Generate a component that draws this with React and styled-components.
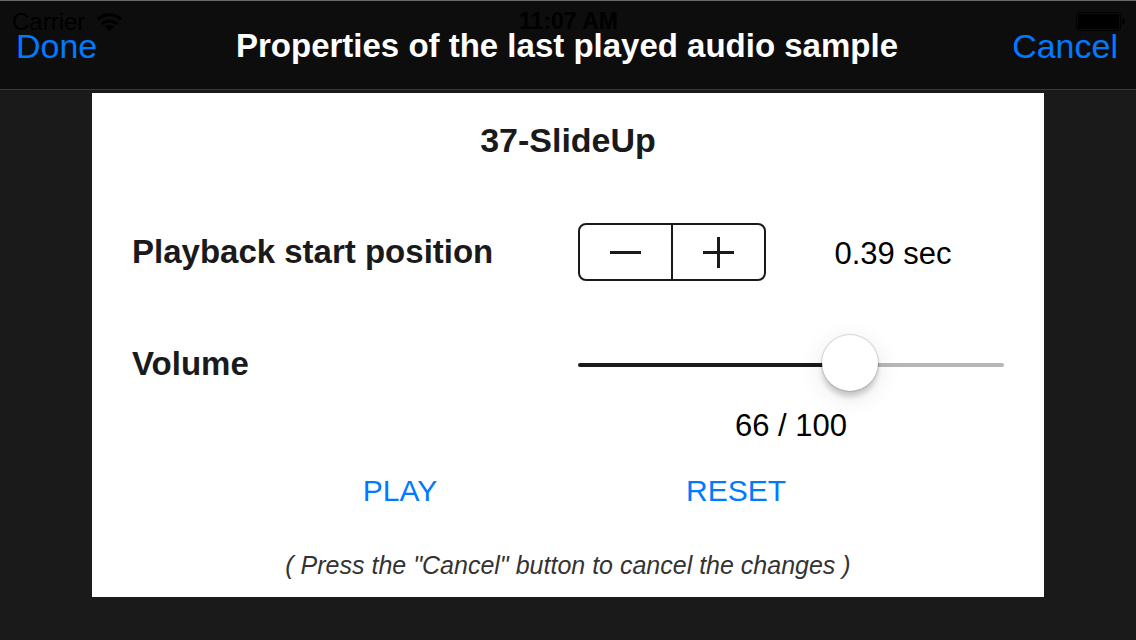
import React, { useState } from 'react';
import styled, { createGlobalStyle } from 'styled-components';

const GlobalStyle = createGlobalStyle`
    body {
        margin: 0;
        background-color: #1a1a1a;
        font-family: 'Liberation Sans', Arial, sans-serif;
    }

    *, *::before, *::after {
        box-sizing: border-box;
    }

    button {
        border: none;
        padding: 0;
        background: none;
        font-family: inherit;
        cursor: pointer;
    }
`;

const Screen = styled.div`
    min-height: 100vh;
    display: flex;
    flex-direction: column;
    border-bottom: 1px solid #1e171c;
`;

const NavBar = styled.header`
    position: relative;
    display: grid;
    grid-template-columns: 1fr auto 1fr;
    align-items: center;
    height: 90px;
    padding: 1px 18px 0 16px;
    background-color: #0d0d0d;
    border-top: 1px solid #666666;
    border-bottom: 1px solid #3a3a3a;
`;

const NavTitle = styled.h1`
    margin: 0;
    color: #ffffff;
    font-size: 33px;
    line-height: 40px;
    font-weight: bold;
`;

const NavButton = styled.button`
    justify-self: ${(props) => props.$side};
    color: #007aff;
    font-size: 34px;
    line-height: 40px;
`;

const StatusBar = styled.div`
    position: absolute;
    top: 0;
    left: 0;
    right: 0;
    display: grid;
    grid-template-columns: 1fr auto 1fr;
    align-items: center;
    height: 41px;
    padding: 0 11px 0 12px;
    color: #000000;
    font-size: 24px;
    pointer-events: none;
`;

const Carrier = styled.div`
    display: flex;
    align-items: center;
    gap: 12px;
`;

const Clock = styled.div`
    font-size: 23px;
    font-weight: bold;
`;

const BatteryIcon = styled.svg`
    justify-self: end;
`;

const Panel = styled.main`
    margin: 3px 92px 0;
    padding: 27px 40px 14px;
    background-color: #ffffff;
    color: #1a1a1a;
`;

const SampleName = styled.h2`
    margin: 0 0 63px;
    font-size: 34px;
    line-height: 40px;
    text-align: center;
`;

const Row = styled.div`
    display: flex;
    align-items: center;
    justify-content: space-between;
    height: 58px;
    margin-bottom: ${(props) => props.$gap};
`;

const Label = styled.label`
    font-size: 33px;
    line-height: 40px;
    font-weight: bold;
`;

const Control = styled.div`
    display: flex;
    align-items: center;
    gap: 16px;
    width: 426px;
`;

const Stepper = styled.div`
    display: flex;
    width: 188px;
    height: 58px;
    border: 2px solid #1a1a1a;
    border-radius: 8px;
`;

const StepButton = styled.button`
    flex: 1;
    display: flex;
    align-items: center;
    justify-content: center;
    color: #1a1a1a;

    & + & {
        border-left: 2px solid #1a1a1a;
    }
`;

const Value = styled.output`
    flex: 1;
    padding-top: 4px;
    color: #000000;
    font-size: 31px;
    line-height: 36px;
    text-align: center;
`;

const VolumeValue = styled(Value)`
    display: block;
    width: 426px;
    margin-left: auto;
`;

const Slider = styled.input`
    appearance: none;
    width: 100%;
    height: 4px;
    margin: 2px 0 0;
    border-radius: 2px;
    background: linear-gradient(to right, #1a1a1a var(--fill), #b6b6b6 var(--fill));
    cursor: pointer;

    &::-webkit-slider-thumb {
        appearance: none;
        width: 56px;
        height: 56px;
        margin-bottom: 4px;
        border-radius: 50%;
        background-color: #ffffff;
        box-shadow: 0 0 1px 1px rgba(0, 0, 0, 0.14), 0 6px 5px rgba(0, 0, 0, 0.16), 0 6px 26px rgba(0, 0, 0, 0.1);
    }
`;

const Actions = styled.div`
    display: grid;
    grid-template-columns: 1fr 1fr;
    max-width: 672px;
    margin: 25px auto 34px;
`;

const ActionButton = styled.button`
    color: #007aff;
    font-size: 30px;
    line-height: 44px;
`;

const Note = styled.p`
    margin: 0;
    color: #333333;
    font-size: 25px;
    line-height: 36px;
    font-style: italic;
    text-align: center;
`;

const App = () => {
    const [position, setPosition] = useState(39); // hundredths of a second
    const [volume, setVolume] = useState(66);

    const handleReset = () => {
        setPosition(0);
        setVolume(100);
    };

    return (
        <Screen>
            <GlobalStyle />
            <NavBar>
                <StatusBar>
                    <Carrier>
                        Carrier
                        <svg width="25" height="18" viewBox="0 0 25 18" aria-hidden="true">
                            <path d="M1 6.5a16.5 16.5 0 0 1 23 0M5 11a10.7 10.7 0 0 1 15 0" fill="none" stroke="#000000" strokeWidth="3" />
                            <path d="M8 13.5a6.5 6.5 0 0 1 9 0L12.5 18z" fill="#000000" />
                        </svg>
                    </Carrier>
                    <Clock>11:07 AM</Clock>
                    <BatteryIcon width="49" height="19" viewBox="0 0 49 19" aria-hidden="true">
                        <rect x="0.5" y="0.5" width="44" height="18" rx="3" fill="none" stroke="#000000" />
                        <rect x="2" y="2" width="41" height="15" rx="1" fill="#000000" />
                        <path d="M46 6c2 0 3 1.5 3 3.5s-1 3.5-3 3.5z" fill="#000000" />
                    </BatteryIcon>
                </StatusBar>
                <NavButton $side="start">Done</NavButton>
                <NavTitle>Properties of the last played audio sample</NavTitle>
                <NavButton $side="end">Cancel</NavButton>
            </NavBar>

            <Panel>
                <SampleName>37-SlideUp</SampleName>

                <Row $gap="54px">
                    <Label id="position-label" as="span">Playback start position</Label>
                    <Control>
                        <Stepper role="group" aria-labelledby="position-label">
                            <StepButton aria-label="Decrease" onClick={() => setPosition(Math.max(0, position - 1))}>
                                <svg width="31" height="31" viewBox="0 0 31 31">
                                    <path d="M0 14h31v3H0z" fill="currentColor" />
                                </svg>
                            </StepButton>
                            <StepButton aria-label="Increase" onClick={() => setPosition(position + 1)}>
                                <svg width="31" height="31" viewBox="0 0 31 31">
                                    <path d="M0 14h31v3H0zM14 0h3v31h-3z" fill="currentColor" />
                                </svg>
                            </StepButton>
                        </Stepper>
                        <Value>{(position / 100).toFixed(2)} sec</Value>
                    </Control>
                </Row>

                <Row $gap="11px">
                    <Label htmlFor="volume">Volume</Label>
                    <Control>
                        <Slider
                            id="volume"
                            type="range"
                            min="0"
                            max="100"
                            value={volume}
                            onChange={(e) => setVolume(Number(e.target.value))}
                            style={{ '--fill': `${volume}%` }}
                        />
                    </Control>
                </Row>
                <VolumeValue htmlFor="volume">{volume} / 100</VolumeValue>

                <Actions>
                    <ActionButton>PLAY</ActionButton>
                    <ActionButton onClick={handleReset}>RESET</ActionButton>
                </Actions>

                <Note>( Press the "Cancel" button to cancel the changes )</Note>
            </Panel>
        </Screen>
    );
};

export default App;
